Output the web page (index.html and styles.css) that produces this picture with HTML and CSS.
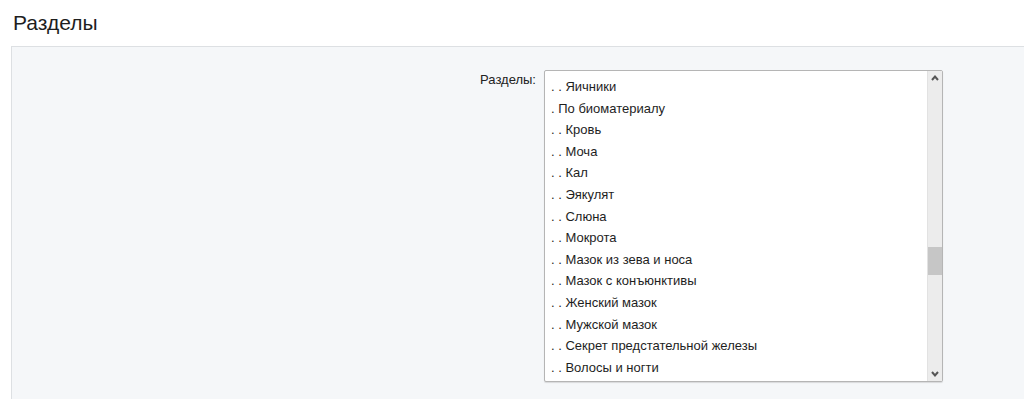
FILE: index.html
```html
<!DOCTYPE html>
<html>
<head>
	<meta charset="UTF-8">
	<title>Разделы</title>
	<link rel="stylesheet" href="styles.css">
</head>
<body>
	<div class="page-head">
		<h1 class="page-title">Разделы</h1>
	</div>
	<div class="panel">
		<div class="form-row">
			<label class="form-label" for="sections">Разделы:</label>
			<div class="listbox" id="sections">
				<ul class="listbox-items">
					<li>. . Яичники</li>
					<li>. По биоматериалу</li>
					<li>. . Кровь</li>
					<li>. . Моча</li>
					<li>. . Кал</li>
					<li>. . Эякулят</li>
					<li>. . Слюна</li>
					<li>. . Мокрота</li>
					<li>. . Мазок из зева и носа</li>
					<li>. . Мазок с конъюнктивы</li>
					<li>. . Женский мазок</li>
					<li>. . Мужской мазок</li>
					<li>. . Секрет предстательной железы</li>
					<li>. . Волосы и ногти</li>
				</ul>
				<div class="scrollbar">
					<svg class="scroll-arrow" width="14" height="14" viewBox="0 0 14 14"><path d="M4 9 L7 5.5 L10 9" fill="none" stroke="#555" stroke-width="2"/></svg>
					<div class="scroll-track">
						<div class="scroll-thumb" style="margin-top: 162px"></div>
					</div>
					<svg class="scroll-arrow" width="14" height="14" viewBox="0 0 14 14"><path d="M4 5 L7 8.5 L10 5" fill="none" stroke="#555" stroke-width="2"/></svg>
				</div>
			</div>
		</div>
	</div>
</body>
</html>
```

FILE: styles.css
```css
body {
	margin: 0;
	padding: 0;
	background: #fff;
	font-family: "Liberation Sans", Arial, sans-serif;
	color: #222;
}
.page-head {
	height: 46px;
	padding-left: 13px;
	display: flex;
	align-items: center;
}
.page-title {
	margin: 0;
	font-size: 21px;
	font-weight: normal;
	color: #1e1e1e;
}
.panel {
	margin-left: 11px;
	height: 353px;
	background: #f5f7f9;
	border-top: 1px solid #dde0e3;
	border-left: 1px solid #dde0e3;
	padding-top: 23px;
	box-sizing: border-box;
}
.form-row {
	display: grid;
	grid-template-columns: 524px 399px;
	column-gap: 8px;
}
.form-label {
	text-align: right;
	font-size: 13px;
	padding-top: 2px;
	color: #222;
}
.listbox {
	display: flex;
	height: 312px;
	box-sizing: border-box;
	background: #fff;
	border: 1px solid #b5b5b5;
	border-radius: 2px;
	box-shadow: 0 1px 1px rgba(0, 0, 0, 0.12);
}
.listbox-items {
	flex: 1;
	list-style: none;
	margin: 0;
	padding: 5px 0 0 6px;
	overflow: hidden;
	font-size: 13px;
	line-height: 21.6px;
	color: #1e1e1e;
}
.scrollbar {
	width: 14px;
	display: flex;
	flex-direction: column;
	background: #ececec;
	border-left: 1px solid #e2e2e2;
}
.scroll-arrow {
	display: block;
	flex: none;
}
.scroll-track {
	flex: 1;
}
.scroll-thumb {
	height: 28px;
	background: #c6c6c6;
}
```
